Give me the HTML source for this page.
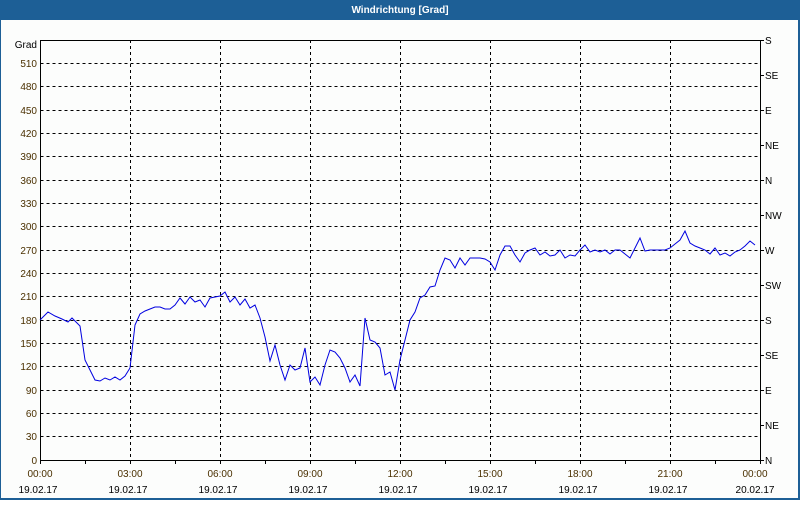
<!DOCTYPE html><html><head><style>body{margin:0;width:800px;height:500px;overflow:hidden;background:#fff}</style></head><body>
<svg width="800" height="500" xmlns="http://www.w3.org/2000/svg" font-family="Liberation Sans, sans-serif" font-size="10">
<rect x="0" y="0" width="800" height="500" fill="#1d5f96"/>
<rect x="1" y="20" width="797" height="478" fill="#fcfdfc"/>
<text x="400" y="13" fill="#fff" font-weight="bold" text-anchor="middle" font-size="10">Windrichtung [Grad]</text>
<g stroke="#000" stroke-dasharray="3,3" stroke-width="1">
<path d="M40.5 63.5H760M40.5 86.5H760M40.5 110.5H760M40.5 133.5H760M40.5 156.5H760M40.5 180.5H760M40.5 203.5H760M40.5 226.5H760M40.5 250.5H760M40.5 273.5H760M40.5 296.5H760M40.5 320.5H760M40.5 343.5H760M40.5 366.5H760M40.5 390.5H760M40.5 413.5H760M40.5 436.5H760"/>
<path d="M130.5 40V460M220.5 40V460M310.5 40V460M400.5 40V460M490.5 40V460M580.5 40V460M670.5 40V460"/>
</g>
<g stroke="#000" fill="none">
<path d="M40.5 40.5H760.5V460.5H40.5Z"/>
<path d="M85.5 460v4M130.5 460v4M175.5 460v4M220.5 460v4M265.5 460v4M310.5 460v4M355.5 460v4M400.5 460v4M445.5 460v4M490.5 460v4M535.5 460v4M580.5 460v4M625.5 460v4M670.5 460v4M715.5 460v4M40.5 460v4M760.5 460v4"/>
<path d="M760 40.5h4M760 75.5h4M760 110.5h4M760 145.5h4M760 180.5h4M760 215.5h4M760 250.5h4M760 285.5h4M760 320.5h4M760 355.5h4M760 390.5h4M760 425.5h4M760 460.5h4"/>
</g>
<g fill="#4a3000" text-anchor="end">
<text x="37" y="48" fill="#000">Grad</text>
<text x="37" y="67">510</text><text x="37" y="90">480</text><text x="37" y="114">450</text><text x="37" y="137">420</text><text x="37" y="160">390</text><text x="37" y="184">360</text><text x="37" y="207">330</text><text x="37" y="230">300</text><text x="37" y="254">270</text><text x="37" y="277">240</text><text x="37" y="300">210</text><text x="37" y="324">180</text><text x="37" y="347">150</text><text x="37" y="370">120</text><text x="37" y="394">90</text><text x="37" y="417">60</text><text x="37" y="440">30</text><text x="37" y="464">0</text>
</g>
<g fill="#000">
<text x="765" y="44">S</text><text x="765" y="79">SE</text><text x="765" y="114">E</text><text x="765" y="149">NE</text><text x="765" y="184">N</text><text x="765" y="219">NW</text><text x="765" y="254">W</text><text x="765" y="289">SW</text><text x="765" y="324">S</text><text x="765" y="359">SE</text><text x="765" y="394">E</text><text x="765" y="429">NE</text><text x="765" y="464">N</text>
</g>
<g text-anchor="middle">
<g fill="#4a3000"><text x="40" y="477">00:00</text><text x="130" y="477">03:00</text><text x="220" y="477">06:00</text><text x="310" y="477">09:00</text><text x="400" y="477">12:00</text><text x="490" y="477">15:00</text><text x="580" y="477">18:00</text><text x="670" y="477">21:00</text><text x="755" y="477">00:00</text></g>
<g fill="#000"><text x="38" y="493">19.02.17</text><text x="128" y="493">19.02.17</text><text x="218" y="493">19.02.17</text><text x="308" y="493">19.02.17</text><text x="398" y="493">19.02.17</text><text x="488" y="493">19.02.17</text><text x="578" y="493">19.02.17</text><text x="668" y="493">19.02.17</text><text x="755" y="493">20.02.17</text></g>
</g>
<polyline fill="none" stroke="#0000e0" stroke-width="1" points="40,320 48,312 55,316 62,319 68,322 72,318 76,322 80,326 85,360 90,370 95,380 100,381 105,378 110,380 115,377 120,380 125,376 130,368 135,325 140,314 145,311 150,309 155,307 160,307 165,309 170,309 175,305 180,298 185,304 190,297 195,302 200,300 205,307 210,298 215,297 220,296 225,292 230,302 235,297 240,305 245,299 250,308 255,305 260,318 265,337 270,361 275,345 280,365 285,380 290,365 295,370 300,368 305,348 310,382 315,377 320,385 325,365 330,350 335,352 340,358 345,368 350,382 355,375 360,386 365,318 370,340 375,342 380,348 385,375 390,372 395,390 400,360 405,340 410,320 415,312 420,298 425,295 430,287 435,286 440,270 445,258 450,260 455,268 460,258 465,265 470,258 475,258 480,258 485,259 490,262 495,270 500,255 505,246 510,246 515,255 520,262 525,253 530,250 535,248 540,255 545,252 550,256 555,255 560,250 565,258 570,255 575,256 580,250 585,245 590,252 595,250 600,252 605,250 610,254 615,250 620,250 625,254 630,258 635,248 640,238 645,251 650,250 655,250 660,250 665,250 670,248 675,244 680,240 685,231 690,243 695,246 700,248 705,250 710,254 715,248 720,255 725,253 730,256 735,252 740,250 745,246 750,241 755,245"/>
</svg>
</body></html>
